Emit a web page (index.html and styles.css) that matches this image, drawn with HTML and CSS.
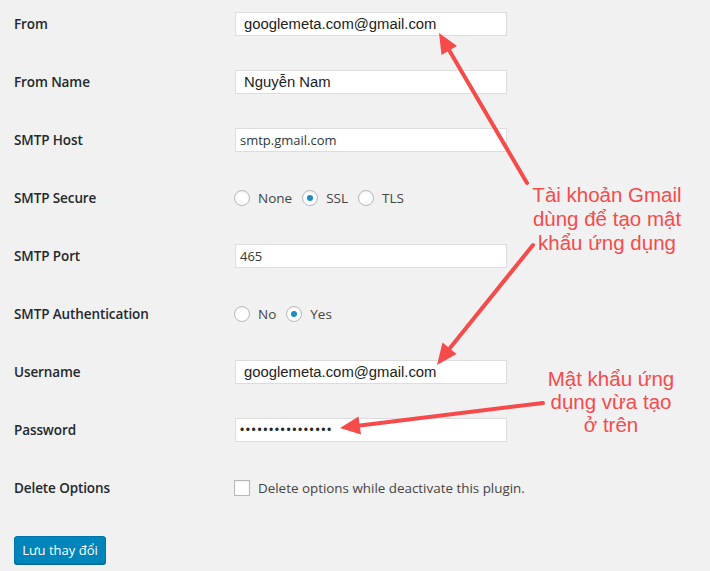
FILE: index.html
```html
<!DOCTYPE html>
<html lang="vi">
<head>
<meta charset="UTF-8">
<title>WP SMTP</title>
<link rel="stylesheet" href="styles.css">
</head>
<body>

<div class="page">
  <form class="smtp-form">
    <div class="row">
      <label class="label">From</label>
      <input class="text big" type="text" value="googlemeta.com@gmail.com">
    </div>
    <div class="row">
      <label class="label">From Name</label>
      <input class="text big" type="text" value="Nguyễn Nam">
    </div>
    <div class="row">
      <label class="label">SMTP Host</label>
      <input class="text" type="text" value="smtp.gmail.com">
    </div>
    <div class="row">
      <label class="label">SMTP Secure</label>
      <div class="choices">
        <span class="radio"></span><span class="opt">None</span>
        <span class="radio checked"></span><span class="opt">SSL</span>
        <span class="radio"></span><span class="opt">TLS</span>
      </div>
    </div>
    <div class="row">
      <label class="label">SMTP Port</label>
      <input class="text" type="text" value="465">
    </div>
    <div class="row">
      <label class="label">SMTP Authentication</label>
      <div class="choices">
        <span class="radio"></span><span class="opt">No</span>
        <span class="radio checked"></span><span class="opt">Yes</span>
      </div>
    </div>
    <div class="row">
      <label class="label">Username</label>
      <input class="text big" type="text" value="googlemeta.com@gmail.com">
    </div>
    <div class="row">
      <label class="label">Password</label>
      <div class="text dots">••••••••••••••••</div>
    </div>
    <div class="row">
      <label class="label">Delete Options</label>
      <div class="choices">
        <span class="check"></span><span class="opt long">Delete options while deactivate this plugin.</span>
      </div>
    </div>
    <button class="button" type="button">Lưu thay đổi</button>
  </form>

  <!-- mũi tên chú thích -->
  <svg class="arrows" width="710" height="571" viewBox="0 0 710 571">
    <g stroke="#f64b4b" stroke-width="4" stroke-linecap="round" fill="#f64b4b">
      <line x1="527" y1="183" x2="449" y2="50"/>
      <line x1="533" y1="245" x2="450" y2="348"/>
      <line x1="543" y1="403" x2="360" y2="425.6"/>
    </g>
    <g fill="#f64b4b">
      <polygon points="439,33 457,46 441.5,55"/>
      <polygon points="437,365 442.5,342.5 456.5,354"/>
      <polygon points="340,428 358.5,416.5 361,434.5"/>
    </g>
  </svg>

  <div class="note note-gmail">Tài khoản Gmail<br>dùng để tạo mật<br>khẩu ứng dụng</div>
  <div class="note note-pass">Mật khẩu ứng<br>dụng vừa tạo<br>ở trên</div>
</div>

</body>
</html>
```

FILE: styles.css
```css
html, body {
  margin: 0;
  padding: 0;
  background: #f1f1f1;
}
.page {
  position: relative;
  width: 710px;
  height: 571px;
  overflow: hidden;
  font-family: "Open Sans", "Liberation Sans", sans-serif;
  color: #23282d;
}
.smtp-form {
  display: flex;
  flex-direction: column;
  gap: 12px;
  padding: 1px 0 0 14px;
}
.row {
  display: flex;
  align-items: center;
  height: 46px;
}
.label {
  width: 221px;
  flex: 0 0 221px;
  font-size: 13.5px;
  font-weight: 600;
  letter-spacing: -0.1px;
}
.text {
  box-sizing: border-box;
  width: 272px;
  height: 24px;
  margin: 0;
  padding: 0 4px;
  border: 1px solid #dddddd;
  background: #ffffff;
  font-family: "Open Sans", "Liberation Sans", sans-serif;
  font-size: 13px;
  color: #32373c;
  outline: none;
}
.text.big {
  padding-left: 8px;
  font-family: "Liberation Sans", Arial, sans-serif;
  font-size: 14.85px;
  color: #222;
}
.dots {
  display: flex;
  align-items: center;
  font-family: "Liberation Sans", Arial, sans-serif;
  font-size: 12px;
  letter-spacing: 1.6px;
  color: #23282d;
}
.choices {
  display: flex;
  align-items: center;
  font-size: 13.5px;
  color: #444;
}
.radio, .check {
  box-sizing: border-box;
  width: 16px;
  height: 16px;
  margin-left: -1px;
  margin-right: 8px;
  border: 1px solid #b4b9be;
  background: #fff;
  box-shadow: inset 0 1px 2px rgba(0,0,0,0.07);
  display: flex;
  align-items: center;
  justify-content: center;
}
.radio {
  border-radius: 50%;
}
.radio.checked::before {
  content: "";
  width: 6px;
  height: 6px;
  border-radius: 50%;
  background: #1e8cbe;
}
.opt {
  margin-right: 11px;
}
.opt.long {
  font-size: 13.4px;
}
.button {
  align-self: flex-start;
  margin-top: 13px;
  width: 92px;
  height: 28px;
  padding: 0;
  border: 1px solid #0073aa;
  border-radius: 3px;
  background: #0085ba;
  box-shadow: 0 1px 0 #006799;
  color: #fff;
  font-family: "Open Sans", "Liberation Sans", sans-serif;
  font-size: 13px;
}
.arrows {
  position: absolute;
  left: 0;
  top: 0;
  pointer-events: none;
}
.note {
  position: absolute;
  width: 200px;
  text-align: center;
  font-family: "Liberation Sans", Arial, sans-serif;
  font-size: 20.5px;
  color: #f64b4b;
}
.note-gmail {
  left: 507px;
  top: 183px;
  line-height: 24px;
}
.note-pass {
  left: 511px;
  top: 367px;
  line-height: 23px;
}
```
